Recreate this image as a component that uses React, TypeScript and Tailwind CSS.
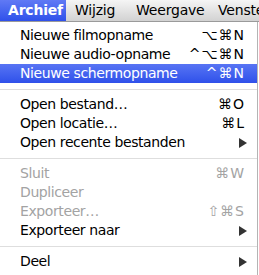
import React from 'react';

type Item =
  | { kind: 'sep' }
  | { kind: 'item'; label: string; shortcut?: string; disabled?: boolean; active?: boolean; submenu?: boolean };

const items: Item[] = [
  { kind: 'item', label: 'Nieuwe filmopname', shortcut: '⌥⌘N' },
  { kind: 'item', label: 'Nieuwe audio-opname', shortcut: '^⌥⌘N' },
  { kind: 'item', label: 'Nieuwe schermopname', shortcut: '^⌘N', active: true },
  { kind: 'sep' },
  { kind: 'item', label: 'Open bestand…', shortcut: '⌘O' },
  { kind: 'item', label: 'Open locatie…', shortcut: '⌘L' },
  { kind: 'item', label: 'Open recente bestanden', submenu: true },
  { kind: 'sep' },
  { kind: 'item', label: 'Sluit', shortcut: '⌘W', disabled: true },
  { kind: 'item', label: 'Dupliceer', disabled: true },
  { kind: 'item', label: 'Exporteer…', shortcut: '⇧⌘S', disabled: true },
  { kind: 'item', label: 'Exporteer naar', submenu: true },
  { kind: 'sep' },
  { kind: 'item', label: 'Deel', submenu: true },
];

const Arrow = () => (
  <svg width="8" height="10" viewBox="0 0 8 10" className="block">
    <polygon points="0,0 8,5 0,10" fill="currentColor" />
  </svg>
);

export default function App() {
  return (
    <div
      className="w-[259px] h-[275px] overflow-hidden bg-white text-[14px] text-black"
      style={{ fontFamily: '"DejaVu Sans", "Lucida Grande", sans-serif' }}
    >
      {/* menu bar */}
      <div className="flex h-[22px] bg-gradient-to-b from-[#f5f5f5] to-[#d2d2d2] border-b border-[#9a9a9a] leading-[21px] whitespace-nowrap overflow-hidden">
        <div className="w-[66px] shrink-0 pl-[8px] font-bold text-white tracking-[-0.2px] bg-gradient-to-b from-[#6079f5] to-[#2f50ea]">Archief</div>
        <div className="w-[60px] shrink-0 pl-[9px] tracking-[-0.2px]">Wijzig</div>
        <div className="w-[82px] shrink-0 pl-[10px] tracking-[-0.2px]">Weergave</div>
        <div className="shrink-0 pl-[10px] tracking-[-0.2px]">Venste</div>
      </div>

      {/* dropdown */}
      <div className="w-[258px] border-r border-[#b4b4b4] bg-white pt-[4px] pb-[4px]">
        {items.map((it, i) =>
          it.kind === 'sep' ? (
            <div key={i} className="h-[12px] flex items-center">
              <div className="h-px w-full bg-[#dedede]" />
            </div>
          ) : (
            <div
              key={i}
              className={`flex items-center justify-between h-[19px] pl-[20px] whitespace-nowrap ${
                it.submenu ? 'pr-[10px]' : 'pr-[12px]'
              } ${
                it.active
                  ? 'bg-gradient-to-b from-[#5874f4] to-[#2f50ea] text-white'
                  : it.disabled
                  ? 'text-[#a3a3a3]'
                  : 'text-black'
              }`}
            >
              <span className="tracking-[-0.4px]">{it.label}</span>
              {it.submenu ? (
                <span className="text-[#333333]">
                  <Arrow />
                </span>
              ) : (
                <span className="tracking-[1px]">{it.shortcut}</span>
              )}
            </div>
          )
        )}
      </div>
    </div>
  );
}
